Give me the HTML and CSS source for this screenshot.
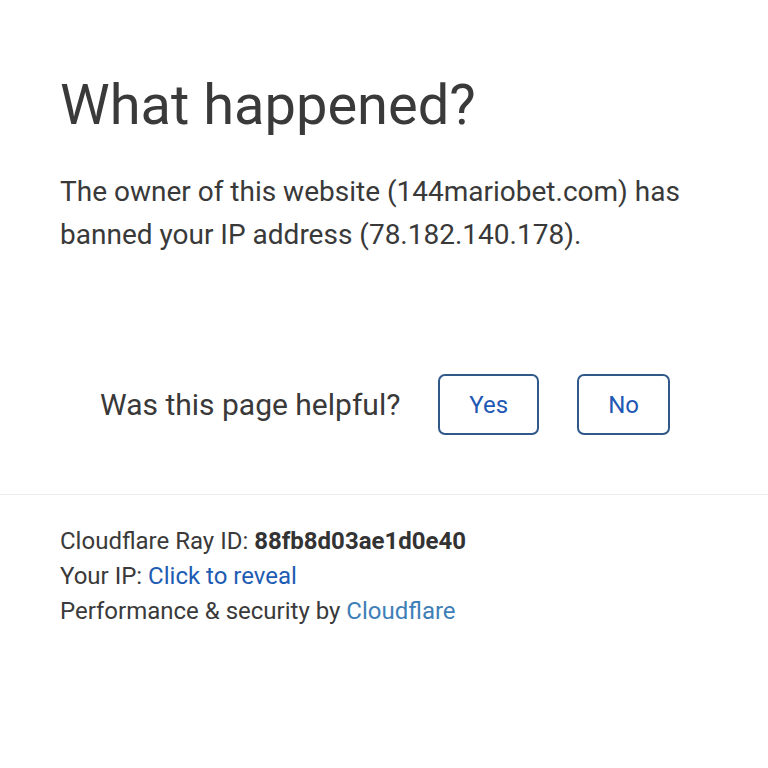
FILE: index.html
```html
<!DOCTYPE html>
<html>
<head>
<meta charset="utf-8">
<link rel="stylesheet" href="styles.css">
</head>
<body>
<main class="main">
  <h1 class="title">What happened?</h1>
  <p class="desc">The owner of this website (144mariobet.com) has banned your IP address (78.182.140.178).</p>
  <div class="feedback">
    <span class="feedback-q">Was this page helpful?</span>
    <button class="fb-btn">Yes</button>
    <button class="fb-btn">No</button>
  </div>
</main>
<footer class="footer">
  <div class="line">Cloudflare Ray ID: <strong class="ray">88fb8d03ae1d0e40</strong></div>
  <div class="line">Your IP: <a class="link" href="#">Click to reveal</a></div>
  <div class="line">Performance &amp; security by <a class="link link-cf" href="#">Cloudflare</a></div>
</footer>
</body>
</html>
```
FILE: styles.css
```css
html, body {
  margin: 0;
  padding: 0;
  background: #ffffff;
}
body {
  font-family: Roboto, "Noto Sans", sans-serif;
  color: #393939;
}
.main {
  padding: 72px 60px 0 60px;
}
.title {
  margin: 0;
  font-size: 56px;
  font-weight: 400;
  line-height: 67px;
  color: #3a3a3a;
}
.desc {
  margin: 31px 0 0 0;
  font-size: 28px;
  line-height: 43px;
  width: 660px;
}
.feedback {
  margin: 118px -60px 0 -60px;
  display: flex;
  align-items: center;
  justify-content: center;
}
.feedback-q {
  font-size: 30px;
  line-height: 35px;
  margin-right: 38px;
  margin-left: 2px;
}
.fb-btn {
  font-family: Roboto, "Noto Sans", sans-serif;
  font-size: 24px;
  color: #1f58b4;
  background: #ffffff;
  border: 2px solid #30598a;
  border-radius: 7px;
  height: 61px;
  padding: 0 29px;
  box-sizing: border-box;
}
.fb-btn + .fb-btn {
  margin-left: 38px;
}
.footer {
  margin-top: 59px;
  border-top: 1px solid #ececec;
  padding: 29px 60px 0 60px;
  font-size: 24px;
  line-height: 35px;
  color: #3a3a3a;
}
.ray {
  font-weight: 700;
  color: #333333;
}
.link {
  color: #1d5cb3;
  text-decoration: none;
}
.link-cf {
  color: #3f7fb8;
}
```
